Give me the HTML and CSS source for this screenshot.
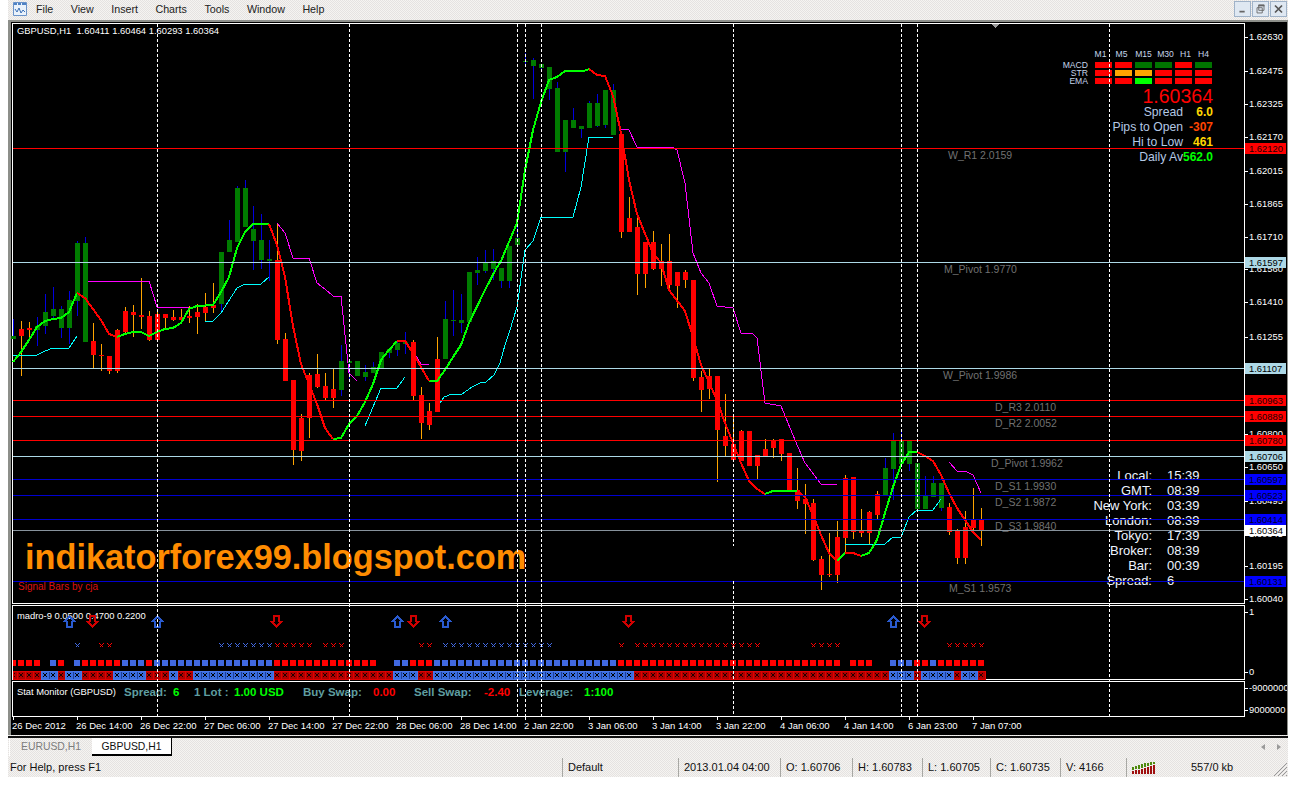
FILE: index.html
```html
<!DOCTYPE html>
<html lang="en">
<head>
<meta charset="utf-8">
<title>GBPUSD,H1</title>
<link rel="stylesheet" href="styles.css">
</head>
<body>
<div class="app">
  <header class="menubar">
    <svg class="appicon" viewBox="0 0 14 14"><path class="ai-bg" d="M.5 .5h13v13H.5z"/><path class="ai-bar" d="M1 1h3v2H1zM5 1h3v2H5zM9 1h4v2H9z"/><path class="ai-line" d="M2 7l2 3 2-4 2 5 2-3 2 2"/></svg>
    <nav class="menu"><span>File</span><span>View</span><span>Insert</span><span>Charts</span><span>Tools</span><span>Window</span><span>Help</span></nav>
    <div class="winbtns">
      <button class="winbtn"><svg viewBox="0 0 17 16"><path class="wi" d="M5 10h6v2H5z"/></svg></button>
      <button class="winbtn"><svg viewBox="0 0 17 16"><path class="wl" d="M6.500 3.500h6v6h-6zM4.500 6.500h6v6h-6z"/><path class="wi" d="M6 3h7v2H6z"/></svg></button>
      <button class="winbtn"><svg viewBox="0 0 17 16"><path class="wx" d="M4.500 4l8 8M12.500 4l-8 8"/></svg></button>
    </div>
  </header>

  <main class="workspace">
    <div class="row row-main">
      <div class="plot">
        <div class="chart-title">GBPUSD,H1&nbsp; 1.60411 1.60464 1.60293 1.60364</div>
        <span class="pivot" style="left:935px;top:125px">W_R1 2.0159</span>
        <span class="pivot" style="left:931px;top:239px">M_Pivot 1.9770</span>
        <span class="pivot" style="left:930px;top:345px">W_Pivot 1.9986</span>
        <span class="pivot" style="left:982px;top:377px">D_R3 2.0110</span>
        <span class="pivot" style="left:982px;top:393px">D_R2 2.0052</span>
        <span class="pivot" style="left:978px;top:433px">D_Pivot 1.9962</span>
        <span class="pivot" style="left:982px;top:456px">D_S1 1.9930</span>
        <span class="pivot" style="left:982px;top:472px">D_S2 1.9872</span>
        <span class="pivot" style="left:982px;top:496px">D_S3 1.9840</span>
        <span class="pivot" style="left:936px;top:558px">M_S1 1.9573</span>

        <div class="signals">
          <span></span><span class="tf">M1</span><span class="tf">M5</span><span class="tf">M15</span><span class="tf">M30</span><span class="tf">H1</span><span class="tf">H4</span>
          <span class="sig-name">MACD</span><i class="r"></i><i class="r"></i><i class="g"></i><i class="g"></i><i class="r"></i><i class="g"></i>
          <span class="sig-name">STR</span><i class="r"></i><i class="o"></i><i class="o"></i><i class="r"></i><i class="r"></i><i class="r"></i>
          <span class="sig-name">EMA</span><i class="r"></i><i class="r"></i><i class="l"></i><i class="r"></i><i class="r"></i><i class="r"></i>
        </div>

        <div class="quote">
          <div class="bigprice">1.60364</div>
          <span>Spread</span><b class="gold">6.0</b>
          <span>Pips to Open</span><b class="orange">-307</b>
          <span>Hi to Low</span><b class="gold">461</b>
          <span>Daily Av</span><b class="lime">562.0</b>
        </div>

        <div class="clock">
          <span>Local:</span><span>15:39</span>
          <span>GMT:</span><span>08:39</span>
          <span>New York:</span><span>03:39</span>
          <span>London:</span><span>08:39</span>
          <span>Tokyo:</span><span>17:39</span>
          <span>Broker:</span><span>08:39</span>
          <span>Bar:</span><span>00:39</span>
          <span>Spread:</span><span>6</span>
        </div>

        <div class="brand">indikatorforex99.blogspot.com</div>
        <div class="signalbars">Signal Bars by cja</div>
      </div>
      <div class="axis">
        <span class="price" style="top:8px">1.62630</span>
        <span class="price" style="top:42px">1.62475</span>
        <span class="price" style="top:75px">1.62325</span>
        <span class="price" style="top:108px">1.62170</span>
        <span class="price" style="top:142px">1.62015</span>
        <span class="price" style="top:175px">1.61865</span>
        <span class="price" style="top:208px">1.61710</span>
        <span class="price" style="top:240px">1.61560</span>
        <span class="price" style="top:273px">1.61410</span>
        <span class="price" style="top:308px">1.61255</span>
        <span class="price" style="top:339px">1.61100</span>
        <span class="price" style="top:371px">1.60950</span>
        <span class="price" style="top:405px">1.60800</span>
        <span class="price" style="top:438px">1.60650</span>
        <span class="price" style="top:472px">1.60495</span>
        <span class="price" style="top:505px">1.60345</span>
        <span class="price" style="top:537px">1.60195</span>
        <span class="price" style="top:570px">1.60040</span>
        <span class="tag tag-red" style="top:119px">1.62120</span>
        <span class="tag tag-pale" style="top:233px">1.61597</span>
        <span class="tag tag-pale" style="top:339px">1.61107</span>
        <span class="tag tag-red" style="top:371px">1.60963</span>
        <span class="tag tag-red" style="top:387px">1.60889</span>
        <span class="tag tag-red" style="top:411px">1.60780</span>
        <span class="tag tag-pale" style="top:427px">1.60706</span>
        <span class="tag tag-blue" style="top:450px">1.60597</span>
        <span class="tag tag-blue" style="top:466px">1.60523</span>
        <span class="tag tag-blue" style="top:490px">1.60414</span>
        <span class="tag tag-white" style="top:501px">1.60364</span>
        <span class="tag tag-blue" style="top:552px">1.60131</span>
      </div>
    </div>

    <div class="row row-ind">
      <div class="plot">
        <div class="ind-title">madro-9 0.0500 0.4700 0.2200</div>
      </div>
      <div class="axis">
        <span class="price" style="top:1px">1</span>
        <span class="price" style="top:61px">0</span>
      </div>
    </div>

    <div class="row row-stat">
      <div class="plot stat">
        <span class="stat-title">Stat Monitor (GBPUSD)</span>
        <b class="teal">Spread:</b><b class="lime">6</b>
        <b class="teal">1 Lot :</b><b class="lime">1.00 USD</b>
        <b class="teal">Buy Swap:</b><b class="red">0.00</b>
        <b class="teal">Sell Swap:</b><b class="red">-2.40</b>
        <b class="teal">Leverage:</b><b class="lime">1:100</b>
      </div>
      <div class="axis">
        <span class="price" style="top:1px">-9000000</span>
        <span class="price" style="top:23px">9000000</span>
      </div>
    </div>

    <div class="timeaxis">
      <span>26 Dec 2012</span><span>26 Dec 14:00</span><span>26 Dec 22:00</span><span>27 Dec 06:00</span>
      <span>27 Dec 14:00</span><span>27 Dec 22:00</span><span>28 Dec 06:00</span><span>28 Dec 14:00</span>
      <span>2 Jan 22:00</span><span>3 Jan 06:00</span><span>3 Jan 14:00</span><span>3 Jan 22:00</span>
      <span>4 Jan 06:00</span><span>4 Jan 14:00</span><span>6 Jan 23:00</span><span>7 Jan 07:00</span>
    </div>
  </main>

  <div class="tabs">
    <span class="tab">EURUSD,H1</span>
    <span class="tab tab-active">GBPUSD,H1</span>
    <span class="tabarrows"><i class="arrow-l"></i><i class="arrow-r"></i></span>
  </div>

  <footer class="status">
    <span>For Help, press F1</span>
    <span class="cell">Default</span>
    <span class="cell">2013.01.04 04:00</span>
    <span class="cell">O: 1.60706</span>
    <span class="cell">H: 1.60783</span>
    <span class="cell">L: 1.60705</span>
    <span class="cell">C: 1.60735</span>
    <span class="cell">V: 4166</span>
    <span class="cell conn">
      <svg class="bars" viewBox="0 0 23 12"><path class="bars-g" d="M1 8V5M4 7V4M7 7V3M10 6V2M13 5V1M16 4V1M19 3V0M22 2V0"/><path class="bars-r" d="M1 12V9M4 12V8M7 12V8M10 12V7M13 12V6M16 12V5M19 12V4M22 12V3"/></svg>
      <span class="kb">557/0 kb</span>
    </span>
    <svg class="grip" viewBox="0 0 15 15"><path d="M14 1L1 14M14 5L5 14M14 9L9 14M14 13L13 14"/></svg>
  </footer>

  <svg class="overlay" viewBox="0 0 1296 785">
    <defs>
      <pattern id="sq-r" patternUnits="userSpaceOnUse" x="2" y="660" width="8" height="6"><rect width="6" height="6" fill="#ff0000"/></pattern>
      <pattern id="sq-b" patternUnits="userSpaceOnUse" x="2" y="660" width="8" height="6"><rect width="6" height="6" fill="#4169e1"/></pattern>
      <pattern id="bx-r" patternUnits="userSpaceOnUse" x="1" y="671" width="8" height="8"><rect width="8" height="8" fill="#b00000"/><path d="M.5 0V8" stroke="#e00000" fill="none"/><path d="M2 2l4 4M6 2l-4 4" stroke="#200000" fill="none"/></pattern>
      <pattern id="bx-b" patternUnits="userSpaceOnUse" x="1" y="671" width="8" height="8"><rect width="8" height="8" fill="#3a6ee0"/><path d="M.5 0V8" stroke="#1e3f9a" fill="none"/><path d="M2 2l4 4M6 2l-4 4" stroke="#000" fill="none"/></pattern>
      <pattern id="xm-r" patternUnits="userSpaceOnUse" x="3" y="643" width="8" height="5"><path d="M.5 .5l4 4M4.500 .5l-4 4" stroke="#ff0000" fill="none"/></pattern>
      <pattern id="xm-b" patternUnits="userSpaceOnUse" x="3" y="643" width="8" height="5"><path d="M.5 .5l4 4M4.500 .5l-4 4" stroke="#4169e1" fill="none"/></pattern>
    </defs>

    <!-- candles -->
    <path class="wick-g" d="M13.500 319V339M37.500 317V346M45.500 294V334M53.500 287V320M61.500 306V338M69.500 291V344M77.500 241V316M85.500 237V342M221.500 252V312M229.500 220V252M237.500 186V242M245.500 180V227M253.500 206V270M261.500 214V269M269.500 240V281M341.500 345V396M349.500 360V380M357.500 361V376M365.500 365V381M373.500 362V373M389.500 349V358M397.500 341V356M405.500 332V354M445.500 301V359M453.500 290V336M461.500 294V333M469.500 272V322M477.500 257V285M485.500 250V273M493.500 249V280M501.500 268V288M509.500 246V288M517.500 225V247M525.500 53V67M533.500 58V99M541.500 64V72M549.500 67V100M557.500 82V152M565.500 120V172M573.500 108V128M581.500 126V138M589.500 101V128M597.500 94V127M605.500 90V128M613.500 84V135M885.500 458V495M893.500 433V500M901.500 432V464M909.500 440V471M917.500 463V510M925.500 476V509M933.500 476V497M941.500 483V511"/>
    <path class="wick-r" d="M21.500 321V376M29.500 322V340M93.500 323V368M101.500 344V371M109.500 356V374M117.500 329V373M125.500 307V334M133.500 305V337M141.500 278V329M149.500 311V341M157.500 310V340M165.500 314V329M173.500 310V321M181.500 309V322M189.500 306V323M197.500 304V334M205.500 293V322M213.500 283V313M277.500 224V344M285.500 333V381M293.500 380V465M301.500 414V461M309.500 373V438M317.500 354V388M325.500 373V400M333.500 369V408M413.500 340V400M421.500 387V439M429.500 403V430M437.500 337V412M621.500 134V238M629.500 197V232M637.500 216V295M645.500 242V288M653.500 231V270M661.500 244V286M669.500 234V290M677.500 272V308M685.500 270V288M693.500 280V381M701.500 371V412M709.500 369V399M717.500 376V482M725.500 394V456M733.500 416V460M741.500 430V461M749.500 431V466M757.500 455V479M765.500 439V456M773.500 439V458M781.500 439V461M789.500 453V491M797.500 468V509M805.500 484V534M813.500 499V561M821.500 556V590M829.500 533V577M837.500 521V583M845.500 475V553M853.500 477V539M861.500 509V537M869.500 511V545M877.500 491V519M949.500 503V535M957.500 529V564M965.500 511V564M973.500 488V533M981.500 508V546"/>
    <path class="body-g" d="M13.500 336V339M37.500 326V330M45.500 312V326M53.500 309V316M61.500 309V328M69.500 300V328M77.500 243V301M85.500 243V342M221.500 252V304M229.500 240V252M237.500 188V242M245.500 188V227M253.500 229V241M261.500 240V260M269.500 259V261M341.500 361V390M349.500 361V363M357.500 361V376M365.500 372V377M373.500 367V373M381.500 352V368M389.500 349V353M397.500 343V350M405.500 342V344M445.500 319V359M453.500 320V321M461.500 320V323M469.500 272V322M477.500 270V273M485.500 263V271M493.500 261V269M501.500 268V281M509.500 246V281M517.500 238V245M525.500 61V62M533.500 60V66M541.500 64V68M549.500 67V89M557.500 88V152M565.500 120V152M573.500 120V128M581.500 126V129M589.500 103V128M597.500 103V126M605.500 90V125M613.500 90V135M885.500 468V495M893.500 441V469M901.500 441V464M909.500 441V464M917.500 463V509M925.500 496V509M933.500 483V497M941.500 483V508"/>
    <path class="body-r" d="M21.500 329V336M29.500 328V330M93.500 341V355M101.500 355V356M109.500 356V371M117.500 330V371M125.500 311V332M133.500 312V315M141.500 315V317M149.500 316V340M157.500 314V340M165.500 314V318M173.500 317V320M181.500 317V320M189.500 316V318M197.500 312V317M205.500 307V313M213.500 305V308M277.500 260V340M285.500 339V381M293.500 380V450M301.500 418V451M309.500 375V418M317.500 374V387M325.500 386V398M333.500 389V398M413.500 342V396M421.500 395V423M429.500 411V425M437.500 359V412M621.500 134V232M629.500 218V232M637.500 227V274M645.500 242V274M653.500 242V269M661.500 261V269M669.500 261V285M677.500 272V286M685.500 272V280M693.500 280V378M701.500 377V390M709.500 376V389M717.500 376V430M725.500 436V446M733.500 444V460M741.500 431V461M749.500 431V466M757.500 455V466M765.500 449V456M773.500 440V448M781.500 439V454M789.500 453V491M797.500 490V501M805.500 499V504M813.500 503V560M821.500 559V575M829.500 574V575M837.500 537V575M845.500 478V538M853.500 477V532M861.500 530V533M869.500 512V533M877.500 494V515M949.500 507V532M957.500 530V558M965.500 527V558M973.500 520V528M981.500 520V531"/>

    <!-- thin indicator lines -->
    <path class="cyan" d="M13 355H37L45 351L53 348H69L77 336M205 321H213L221 313L237 288L245 284H261L269 277M365 426L373 407L381 388H397L405 377M440 403L444 397L452 394H462L472 387L480 383L486 382L494 375L500 363L505 345L510 330L517 307L525 250L533 241L541 217H573L581 187L589 137H613M845 544H885L893 537H901L909 517L917 510H933L941 499"/>
    <path class="magenta" d="M88 281H149L157 307H189M277 223L285 233L293 258H309L317 283L325 289L333 296H341L349 373L357 381M416 356L421 364H429M621 129L629 130L637 147H672L677 150L685 183L693 253L701 273L709 283L717 306L733 308L741 333H752L757 338L765 403L781 406L795 440L805 463L821 484H837M949 462L957 471H965L973 475L981 493"/>

    <!-- thick trend line -->
    <path class="trend-g" d="M13 362L21 352L29 340L37 327L45 321L53 319L61 318L69 312L77 293M117 337L125 334L133 332H141L149 336L157 332L165 329L173 328L181 323L189 309L197 306L213 305L221 292L229 277L237 248L245 232L253 224H269M333 439L341 438L349 424L357 416L365 402L373 384L381 360L389 350L397 341M429 381H437L445 370L453 357L461 345L469 323L485 290L496 269L501 261L517 223L525 170L533 130L541 102L549 80L557 77L565 71H584L589 69M765 494L773 491H797M837 561L845 553M861 556L869 553L877 540L885 513L893 487L901 465L909 452H917"/>
    <path class="trend-r" d="M77 293L85 298L93 309L101 320L109 334L117 337M269 224L277 245L285 277L293 326L301 364L309 384L317 404L325 428L333 439M397 341H405L413 353L421 367L429 381M589 69L597 75L605 76L613 96L621 133L629 180L637 214L653 253L661 263L669 290L685 311L693 337L701 365L717 400L725 423L741 463L749 481L757 489L765 494M797 491L805 497L813 515L821 535L829 553L837 561M845 553H853L861 556M917 452L925 456L933 461L941 475L949 493L957 508L965 520L973 532L981 540"/>

    <!-- horizontal levels -->
    <path class="h h-red" d="M13 148.500H1244M13 400.500H1244M13 416.500H1244M13 440.500H1244"/>
    <path class="h h-pale" d="M13 262.500H1244M13 368.500H1244M13 456.500H1244"/>
    <path class="h h-blue" d="M13 479.500H1244M13 495.500H1244M13 519.500H1244M13 581.500H1244"/>
    <path class="h h-gray" d="M13 530.500H1244"/>

    <!-- indicator sub window -->
    <path class="arrow-up" d="M69.500 616.500l5 5h-2.500v5.500h-5v-5.500h-2.500zM157.500 616.500l5 5h-2.500v5.500h-5v-5.500h-2.500zM397.500 616.500l5 5h-2.500v5.500h-5v-5.500h-2.500zM445.500 616.500l5 5h-2.500v5.500h-5v-5.500h-2.500zM893.500 616.500l5 5h-2.500v5.500h-5v-5.500h-2.500z"/>
    <path class="arrow-dn" d="M92.500 626.500l5-5h-2.500v-5.500h-5v5.500h-2.500zM276.500 626.500l5-5h-2.500v-5.500h-5v5.500h-2.500zM413.500 626.500l5-5h-2.500v-5.500h-5v5.500h-2.500zM628.500 626.500l5-5h-2.500v-5.500h-5v5.500h-2.500zM924.500 626.500l5-5h-2.500v-5.500h-5v5.500h-2.500z"/>

    <g fill="url(#xm-b)"><rect x="75" y="643" width="8" height="5"/><rect x="219" y="643" width="56" height="5"/><rect x="443" y="643" width="112" height="5"/></g>
    <g fill="url(#xm-r)"><rect x="99" y="643" width="16" height="5"/><rect x="275" y="643" width="40" height="5"/><rect x="323" y="643" width="24" height="5"/><rect x="419" y="643" width="16" height="5"/><rect x="619" y="643" width="8" height="5"/><rect x="635" y="643" width="128" height="5"/><rect x="811" y="643" width="32" height="5"/><rect x="947" y="643" width="40" height="5"/></g>

    <g fill="url(#sq-r)"><rect x="13" y="660" width="29" height="6"/><rect x="58" y="660" width="8" height="6"/><rect x="82" y="660" width="40" height="6"/><rect x="146" y="660" width="8" height="6"/><rect x="274" y="660" width="104" height="6"/><rect x="410" y="660" width="24" height="6"/><rect x="618" y="660" width="224" height="6"/><rect x="850" y="660" width="24" height="6"/><rect x="914" y="660" width="16" height="6"/><rect x="938" y="660" width="48" height="6"/></g>
    <g fill="url(#sq-b)"><rect x="50" y="660" width="8" height="6"/><rect x="74" y="660" width="8" height="6"/><rect x="122" y="660" width="24" height="6"/><rect x="154" y="660" width="120" height="6"/><rect x="394" y="660" width="16" height="6"/><rect x="434" y="660" width="184" height="6"/><rect x="890" y="660" width="24" height="6"/><rect x="930" y="660" width="8" height="6"/></g>

    <g class="bx-r" fill="url(#bx-r)"><rect x="13" y="671" width="28" height="8"/><rect x="57" y="671" width="8" height="8"/><rect x="81" y="671" width="32" height="8"/><rect x="145" y="671" width="24" height="8"/><rect x="177" y="671" width="16" height="8"/><rect x="273" y="671" width="120" height="8"/><rect x="417" y="671" width="16" height="8"/><rect x="633" y="671" width="256" height="8"/><rect x="913" y="671" width="8" height="8"/><rect x="953" y="671" width="8" height="8"/><rect x="977" y="671" width="8" height="8"/></g>
    <g class="bx-b" fill="url(#bx-b)"><rect x="41" y="671" width="16" height="8"/><rect x="65" y="671" width="16" height="8"/><rect x="113" y="671" width="32" height="8"/><rect x="169" y="671" width="8" height="8"/><rect x="193" y="671" width="80" height="8"/><rect x="393" y="671" width="24" height="8"/><rect x="433" y="671" width="200" height="8"/><rect x="889" y="671" width="24" height="8"/><rect x="921" y="671" width="32" height="8"/><rect x="961" y="671" width="16" height="8"/></g>

    <!-- period separators -->
    <path class="sep" d="M157.500 24V716M349.500 24V716M517.500 24V716M525.500 24V716M541.500 24V716M733.500 24V546M733.500 581V716M901.500 24V716M917.500 24V716M1109.500 24V716"/>
    <polygon class="shift" points="991,24 999,24 995,28"/>
  </svg>
</div>
</body>
</html>
```

FILE: styles.css
```css
* { box-sizing: border-box; }
html, body { margin: 0; padding: 0; background: #fff; }
body { width: 1296px; height: 785px; overflow: hidden; font-family: "Liberation Sans", Arial, sans-serif; color: #111; }

.app {
  position: relative;
  width: 1280px;
  height: 777px;
  margin-left: 8px;
  display: flex;
  flex-direction: column;
  background: repeating-conic-gradient(#f5f4f1 0 25%, #e5e2e1 0 50%) 0 0 / 2px 2px;
}

/* menu */
.menubar { height: 20px; flex: none; display: flex; align-items: flex-start; font-size: 10.700px; }
.appicon { width: 14px; height: 14px; margin: 2px 0 0 5px; flex: none; }
.ai-bg { fill: #eaf2fb; stroke: #6b93c9; }
.ai-bar { fill: #4f82c4; }
.ai-line { fill: none; stroke: #3a6fb5; }
.menu { display: flex; gap: 17.500px; margin-left: 9px; line-height: 18px; color: #222; }
.winbtns { margin-left: auto; display: flex; gap: 1px; margin-top: 1px; margin-right: 1px; }
.winbtn { width: 17px; height: 16px; padding: 0; border: 1px solid #9fb2c8; background: #dfe8f2; display: block; }
.winbtn svg { display: block; width: 15px; height: 14px; }
.wi { fill: #666; }
.wl { fill: none; stroke: #666; }
.wx { fill: none; stroke: #555; stroke-width: 2; }

/* workspace */
.workspace {
  flex: none;
  height: 715px;
  background: #000;
  border-top: 2px solid #8d8f8a;
  border-left: 3px solid #8d8f8a;
  border-right: 1px solid #8d8f8a;
  padding: 1px 0 0 1px;
  display: flex;
  flex-direction: column;
  gap: 1px;
}
.row { display: flex; flex: none; }
.row-main { height: 581px; }
.row-ind { height: 75px; }
.row-stat { height: 36px; }
.plot { position: relative; width: 1233px; height: 100%; border: 1px solid #fff; flex: none; color: #fff; }
.axis { position: relative; flex: 1; height: 100%; overflow: hidden; }

.price, .tag { position: absolute; font-size: 9.400px; line-height: 12px; white-space: nowrap; }
.price { left: 4px; color: #fff; }
.price::before { content: ""; position: absolute; left: -4px; top: 6px; width: 3px; height: 1px; background: #fff; }
.tag { left: 0; width: 41px; height: 11px; line-height: 11px; padding-left: 4px; color: #200; margin-top: 1px; }
.tag-red { background: #ff0000; }
.tag-pale { background: #add8e6; color: #000; }
.tag-blue { background: #0000ff; color: #000024; }
.tag-white { background: #fff; color: #000; }

.chart-title { position: absolute; left: 4px; top: 1px; font-size: 9.400px; line-height: 12px; white-space: nowrap; }
.pivot { position: absolute; font-size: 10.500px; line-height: 12px; color: #717171; white-space: nowrap; }

/* signal matrix */
.signals {
  position: absolute;
  left: 1047px;
  top: 24px;
  display: grid;
  grid-template-columns: 32px repeat(6, 17px);
  grid-template-rows: 12px 6px 6px 6px;
  column-gap: 3px;
  row-gap: 2px;
  font-size: 8.600px;
  color: #c4d4ea;
}
.signals i { display: block; }
.signals .r { background: #ff0000; }
.signals .g { background: #007400; }
.signals .o { background: #ffa500; }
.signals .l { background: #00ff00; }
.tf { text-align: center; line-height: 12px; white-space: nowrap; }
.tf:nth-child(2) { transform: translateX(-3px); }
.tf:nth-child(3) { transform: translateX(-2px); }
.tf:nth-child(5), .tf:nth-child(6) { transform: translateX(2px); }
.sig-name { text-align: right; padding-right: 4px; line-height: 6px; }

/* quote box */
.quote {
  position: absolute;
  left: 1087px;
  top: 63px;
  display: grid;
  grid-template-columns: 83px 30px;
  grid-template-rows: 18px;
  grid-auto-rows: 15px;
  font-size: 12.200px;
  line-height: 15px;
  color: #b4c8e4;
  text-align: right;
  white-space: nowrap;
}
.quote b { font-size: 12px; }
.bigprice { grid-column: 1 / 3; height: 18px; line-height: 18px; font-size: 19.500px; color: #ff0000; }
.gold { color: #ffd700; }
.orange { color: #ff4500; }
.lime { color: #00ff00; }
.red { color: #ff0000; }
.teal { color: #5f9ea0; }

/* clock */
.clock {
  position: absolute;
  left: 1077px;
  top: 444px;
  display: grid;
  grid-template-columns: 62px 40px;
  column-gap: 15px;
  grid-auto-rows: 15px;
  font-size: 13px;
  line-height: 15px;
  color: #eef4ff;
  white-space: nowrap;
}
.clock span:nth-child(odd) { text-align: right; }

.brand {
  position: absolute;
  left: 12px;
  top: 513px;
  font-size: 34.300px;
  line-height: 40px;
  font-weight: 700;
  color: #ff8c00;
  white-space: nowrap;
}
.signalbars { position: absolute; left: 5px; top: 557px; font-size: 10px; line-height: 12px; color: #dd1010; }

.ind-title { position: absolute; left: 4px; top: 4px; font-size: 9.400px; line-height: 12px; white-space: nowrap; }

.stat {
  display: grid;
  grid-template-columns: 107px 49px 21px 40px 69px 70px 41px 70px 35px 65px auto;
  align-content: start;
  padding: 4px 0 0 4px;
  line-height: 12px;
  white-space: nowrap;
}
.stat-title { font-size: 9.400px; }
.stat b { font-size: 11.500px; }

.timeaxis { display: flex; padding-left: 1px; height: 18px; flex: none; margin-top: -1px; color: #fff; font-size: 9.500px; }
.timeaxis span {
  flex: 0 0 64px;
  padding-top: 3px;
  line-height: 12px;
  text-indent: -1px;
  white-space: nowrap;
  background: linear-gradient(#fff, #fff) 0 0 / 1px 3px no-repeat;
}

/* tabs */
.tabs {
  height: 20px;
  flex: none;
  margin-top: 1px;
  border-top: 2px solid #111;
  display: flex;
  position: relative;
  padding-left: 1px;
  font-size: 10.400px;
  line-height: 17px;
  text-align: center;
}
.tab { width: 83px; height: 18px; color: #7c7c7c; border-left: 1px solid #fff; }
.tab-active { width: 80px; background: #fff; color: #111; border-left: 0; border-right: 1px solid #000; border-bottom: 2px solid #000; }
.tabarrows { position: absolute; right: 7px; top: 6px; display: flex; gap: 12px; }
.tabarrows i { display: block; width: 0; height: 0; border-top: 3.500px solid transparent; border-bottom: 3.500px solid transparent; }
.arrow-l { border-right: 4px solid #9a9a9a; }
.arrow-r { border-left: 4px solid #9a9a9a; }

/* status bar */
.status {
  flex: 1;
  display: grid;
  grid-template-columns: 554px 116px 102px 72px 70px 68px 70px 66px 1fr;
  align-items: stretch;
  font-size: 11px;
  line-height: 19px;
  padding-top: 2px;
  white-space: nowrap;
  position: relative;
}
.status > span:first-child { padding-left: 2px; }
.cell { border-left: 1px solid #a8a8a4; padding-left: 5px; }
.conn { display: flex; align-items: center; padding-left: 5px; }
.bars { width: 23px; height: 12px; flex: none; }
.bars-g { stroke: #4f8a10; stroke-width: 2; fill: none; }
.bars-r { stroke: #a01010; stroke-width: 2; fill: none; }
.kb { margin-left: 36px; }
.grip { position: absolute; right: 0; bottom: 0; width: 15px; height: 15px; }
.grip path { stroke: #999; fill: none; }

/* chart drawing layer */
.overlay { position: absolute; left: -8px; top: 0; width: 1296px; height: 785px; pointer-events: none; shape-rendering: crispEdges; }
.wick-g { stroke: #0000e0; fill: none; }
.wick-r { stroke: #ffa500; fill: none; }
.body-g { stroke: #007c00; stroke-width: 5; fill: none; }
.body-r { stroke: #ff0000; stroke-width: 5; fill: none; }
.cyan { stroke: #00ffff; fill: none; }
.magenta { stroke: #ff00ff; fill: none; }
.trend-g { stroke: #00ff00; stroke-width: 2; fill: none; }
.trend-r { stroke: #ff0000; stroke-width: 2; fill: none; }
.h { fill: none; stroke-width: 1; }
.h-red { stroke: #ff0000; }
.h-pale { stroke: #add8e6; }
.h-blue { stroke: #0000d0; }
.h-gray { stroke: #87929c; }
.arrow-up { fill: none; stroke: #2a5bd0; stroke-width: 1.500; }
.arrow-dn { fill: none; stroke: #d00000; stroke-width: 1.500; }
.bx-r rect { stroke: #e00000; stroke-width: 1; }
.bx-b rect { stroke: #4a78e8; stroke-width: 1; }
.sep { fill: none; stroke: #fff; stroke-dasharray: 3 2; }
.shift { fill: #9a9a9a; }
```
